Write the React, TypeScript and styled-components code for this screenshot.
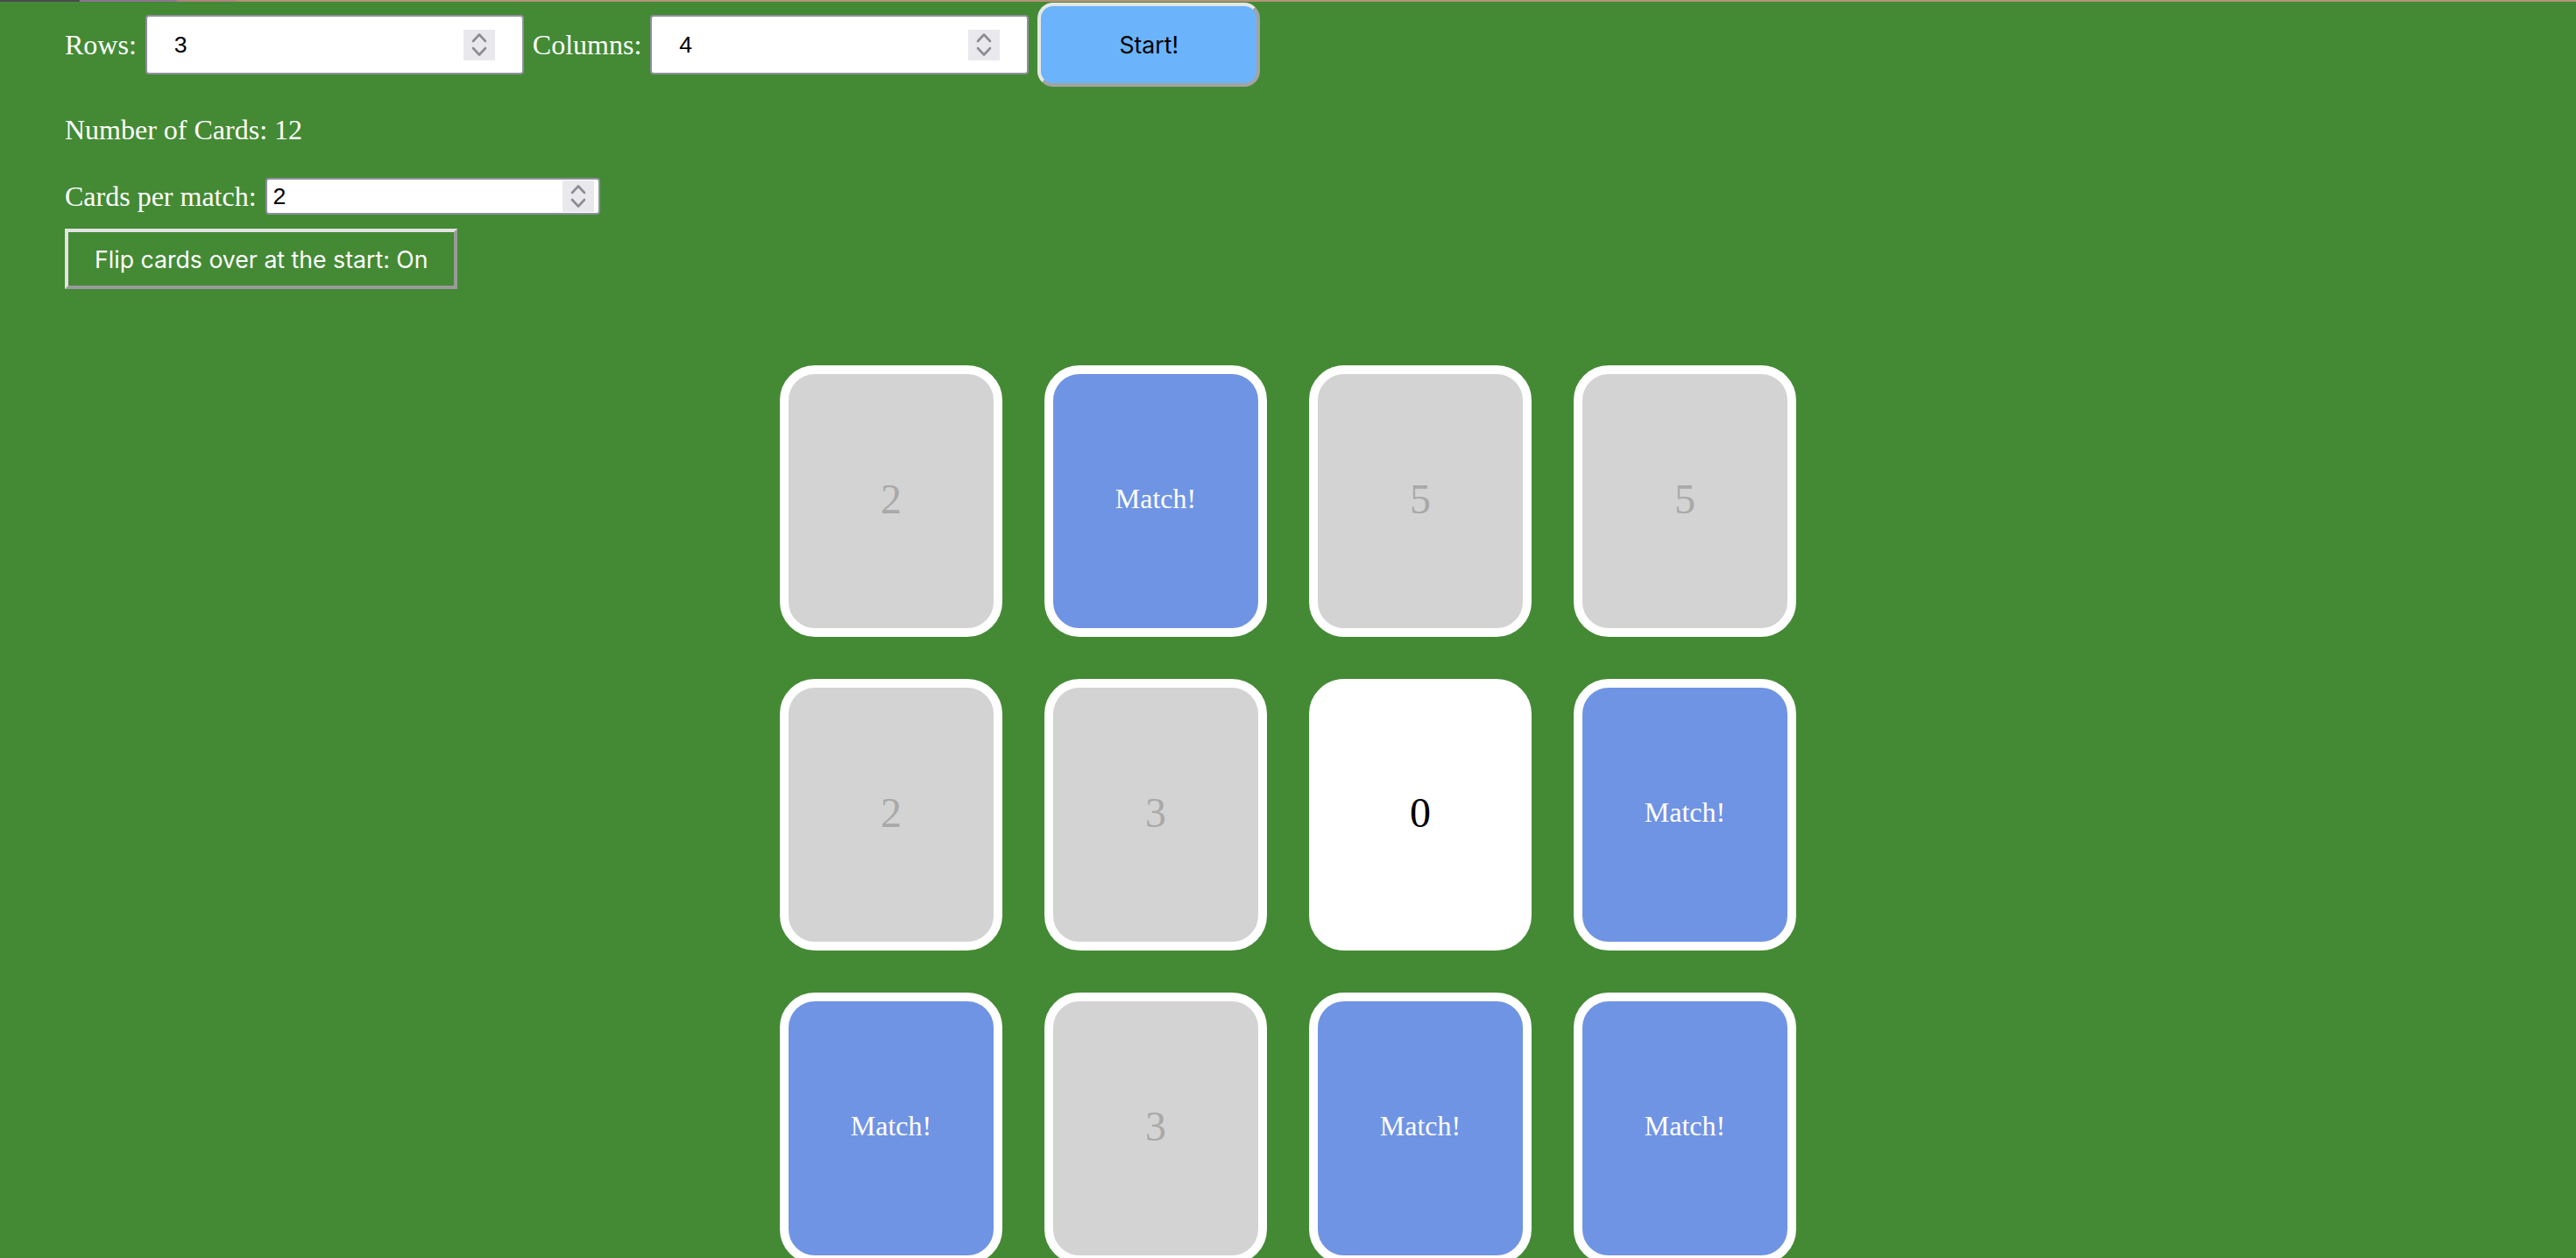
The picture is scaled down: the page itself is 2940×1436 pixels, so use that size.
import { useState } from 'react';
import styled, { createGlobalStyle, css } from 'styled-components';

type CardState = 'hidden' | 'shown' | 'matched';

type CardData = {
  value: number;
  state: CardState;
};

const cards: CardData[] = [
  { value: 2, state: 'hidden' },
  { value: 4, state: 'matched' },
  { value: 5, state: 'hidden' },
  { value: 5, state: 'hidden' },
  { value: 2, state: 'hidden' },
  { value: 3, state: 'hidden' },
  { value: 0, state: 'shown' },
  { value: 1, state: 'matched' },
  { value: 1, state: 'matched' },
  { value: 3, state: 'hidden' },
  { value: 0, state: 'matched' },
  { value: 4, state: 'matched' },
];

function SpinIcon() {
  return (
    <svg width="36" height="35" viewBox="0 0 36 35" aria-hidden={true}>
      <path
        d="M11 13 L18 5.5 L25 13"
        fill="none"
        stroke="#8c8c92"
        strokeWidth="2.6"
        strokeLinecap="round"
        strokeLinejoin="round"
      />
      <path
        d="M11 21 L18 28.5 L25 21"
        fill="none"
        stroke="#8c8c92"
        strokeWidth="2.6"
        strokeLinecap="round"
        strokeLinejoin="round"
      />
    </svg>
  );
}

type FieldProps = {
  value: string;
  onChange: (value: string) => void;
  $size?: 'large' | 'small';
};

function NumberField({ value, onChange, $size = 'large' }: FieldProps) {
  return (
    <FieldBox $size={$size}>
      <FieldInput
        type="number"
        value={value}
        onChange={(e) => onChange(e.target.value)}
      />
      <Spinner $size={$size}>
        <SpinIcon />
      </Spinner>
    </FieldBox>
  );
}

export default function App() {
  const [rows, setRows] = useState('3');
  const [columns, setColumns] = useState('4');
  const [perMatch, setPerMatch] = useState('2');
  const [flipAtStart, setFlipAtStart] = useState(true);

  const total = (Number(rows) || 0) * (Number(columns) || 0);

  return (
    <>
      <GlobalStyle />
      <TopEdge />
      <Page>
        <Controls>
          <SizeRow>
            <Label>Rows:</Label>
            <NumberField value={rows} onChange={setRows} />
            <Label>Columns:</Label>
            <NumberField value={columns} onChange={setColumns} />
            <StartButton>Start!</StartButton>
          </SizeRow>

          <CardCount>Number of Cards: {total}</CardCount>

          <MatchRow>
            <Label>Cards per match:</Label>
            <NumberField value={perMatch} onChange={setPerMatch} $size="small" />
          </MatchRow>

          <FlipButton onClick={() => setFlipAtStart(!flipAtStart)}>
            Flip cards over at the start: {flipAtStart ? 'On' : 'Off'}
          </FlipButton>
        </Controls>

        <Board>
          {cards.map((card, index) => (
            <Card key={index} $state={card.state}>
              {card.state === 'matched' ? 'Match!' : card.value}
            </Card>
          ))}
        </Board>
      </Page>
    </>
  );
}

const GlobalStyle = createGlobalStyle`
  html, body {
    margin: 0;
    padding: 0;
    background-color: #448a35;
  }

  body {
    font-family: 'Liberation Serif', 'Times New Roman', serif;
    color: #ffffff;
  }

  input[type='number']::-webkit-inner-spin-button,
  input[type='number']::-webkit-outer-spin-button {
    -webkit-appearance: none;
    margin: 0;
  }
`;

const TopEdge = styled.div`
  height: 2px;
  background: linear-gradient(
    to right,
    #4b494e 0px,
    #4b494e 90px,
    #8f7494 92px,
    #8f7494 200px,
    #b08282 204px,
    #b08282 268px,
    #b4937a 272px,
    #b4937a 100%
  );
`;

const Page = styled.div`
  min-height: 1434px;
  padding-top: 1px;
  box-sizing: border-box;
`;

const Controls = styled.div`
  padding-left: 74px;
  display: flex;
  flex-direction: column;
  align-items: flex-start;
`;

const SizeRow = styled.div`
  display: flex;
  align-items: center;
  gap: 10px;
  height: 96px;
`;

const Label = styled.span`
  font-size: 32px;
  line-height: 36px;
  color: #ffffff;
  white-space: nowrap;
`;

const FieldBox = styled.div<{ $size: 'large' | 'small' }>`
  display: flex;
  align-items: center;
  box-sizing: border-box;
  background-color: #ffffff;
  border: 2px solid #8f8f9d;
  border-radius: 4px;

  ${({ $size }) =>
    $size === 'large'
      ? css`
          width: 432px;
          height: 68px;
          padding: 0 31px;
        `
      : css`
          width: 382px;
          height: 42px;
          padding: 0 5px 0 7px;
        `}
`;

const FieldInput = styled.input`
  flex: 1;
  min-width: 0;
  border: none;
  outline: none;
  padding: 0;
  background: transparent;
  font-family: 'Liberation Sans', Arial, sans-serif;
  font-size: 26.67px;
  color: #000000;
  -moz-appearance: textfield;
`;

const Spinner = styled.div<{ $size: 'large' | 'small' }>`
  display: flex;
  align-items: center;
  justify-content: center;
  width: 36px;
  height: ${({ $size }) => ($size === 'large' ? '35px' : '36px')};
  background-color: #e9e9ed;
  flex-shrink: 0;
`;

const StartButton = styled.button`
  width: 254px;
  height: 96px;
  box-sizing: border-box;
  background-color: #6bb4fb;
  border: 4px solid;
  border-color: #e6e6e6 #a3a3a3 #a3a3a3 #e6e6e6;
  border-radius: 18px;
  font-family: 'Inter', 'Liberation Sans', sans-serif;
  font-size: 26.67px;
  color: #000000;
  cursor: pointer;
`;

const CardCount = styled.p`
  margin: 31px 0 0;
  font-size: 32px;
  line-height: 36px;
`;

const MatchRow = styled.div`
  display: flex;
  align-items: center;
  gap: 10px;
  margin-top: 37px;
`;

const FlipButton = styled.button`
  margin-top: 16px;
  width: 448px;
  height: 69px;
  box-sizing: border-box;
  padding: 0 30px;
  background-color: transparent;
  border: 4px solid;
  border-color: #e3e3e3 #9a9a9a #9a9a9a #e3e3e3;
  border-radius: 0;
  font-family: 'Inter', 'Liberation Sans', sans-serif;
  font-size: 26.67px;
  color: #ffffff;
  white-space: nowrap;
  cursor: pointer;
`;

const Board = styled.div`
  margin-top: 87px;
  display: grid;
  grid-template-columns: repeat(4, 254px);
  grid-auto-rows: 310px;
  gap: 48px;
  justify-content: center;
`;

const cardLooks = {
  hidden: css`
    background-color: #d3d3d3;
    color: #a9a9a9;
    font-size: 48px;
  `,
  shown: css`
    background-color: #ffffff;
    color: #000000;
    font-size: 48px;
  `,
  matched: css`
    background-color: #7094e4;
    color: #ffffff;
    font-size: 32px;
  `,
};

const Card = styled.div<{ $state: CardState }>`
  box-sizing: border-box;
  display: flex;
  align-items: center;
  justify-content: center;
  padding-bottom: 6px;
  border: 10px solid #ffffff;
  border-radius: 40px;
  font-family: 'Liberation Serif', 'Times New Roman', serif;
  cursor: pointer;

  ${({ $state }) => cardLooks[$state]}
`;
